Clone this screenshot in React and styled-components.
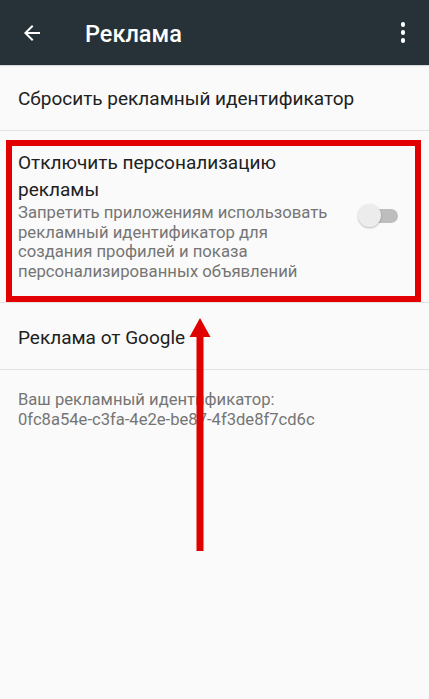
import React from "react";
import styled, { createGlobalStyle } from "styled-components";

const GlobalStyle = createGlobalStyle`
  html, body {
    margin: 0;
    padding: 0;
    background: #fafafa;
  }
  body {
    font-family: Roboto, "Noto Sans", "Liberation Sans", sans-serif;
    -webkit-font-smoothing: antialiased;
  }
`;

function App() {
  return (
    <Screen>
      <GlobalStyle />
      <Toolbar>
        <BackButton>
          <svg width="24" height="24" viewBox="0 0 24 24">
            <path
              d="M20 11H7.83l5.59-5.59L12 4l-8 8 8 8 1.41-1.41L7.83 13H20v-2z"
              fill="#fff"
            />
          </svg>
        </BackButton>
        <Title>Реклама</Title>
        <MenuButton>
          <Dot />
          <Dot />
          <Dot />
        </MenuButton>
      </Toolbar>

      <Row>
        <RowTitle>Сбросить рекламный идентификатор</RowTitle>
      </Row>
      <Divider />

      <HighlightSection>
        <Highlight>
          <SwitchRow>
            <TextCol>
              <RowTitle $multi>Отключить персонализацию рекламы</RowTitle>
              <Summary>
                Запретить приложениям использовать рекламный идентификатор для
                создания профилей и показа персонализированных объявлений
              </Summary>
            </TextCol>
            <Switch>
              <Track />
              <Thumb />
            </Switch>
          </SwitchRow>
        </Highlight>
      </HighlightSection>
      <Divider />

      <Row $tall>
        <RowTitle>Реклама от Google</RowTitle>
      </Row>
      <Divider />

      <Footer>
        Ваш рекламный идентификатор:
        <br />
        0fc8a54e-c3fa-4e2e-be87-4f3de8f7cd6c
      </Footer>

      <Arrow width="22" height="233" viewBox="0 0 22 233">
        <polygon points="11,0 21.5,19 0.5,19" fill="#e00000" />
        <rect x="7.5" y="17" width="7" height="216" fill="#e00000" />
      </Arrow>
    </Screen>
  );
}

const Screen = styled.div`
  position: relative;
  width: 429px;
  height: 699px;
  overflow: hidden;
  background: #fafafa;
`;

const Toolbar = styled.div`
  display: flex;
  align-items: center;
  height: 65px;
  background: #263238;
  box-shadow: 0 1px 1px rgba(0, 0, 0, 0.12);
`;

const BackButton = styled.div`
  display: flex;
  align-items: center;
  justify-content: center;
  width: 24px;
  height: 24px;
  margin-left: 20px;
`;

const Title = styled.div`
  flex: 1;
  margin-left: 41px;
  padding-top: 2px;
  color: #fff;
  font-size: 23.5px;
  font-weight: 500;
`;

const MenuButton = styled.div`
  display: flex;
  flex-direction: column;
  align-items: center;
  gap: 3.5px;
  margin-right: 24px;
`;

const Dot = styled.span`
  width: 4.5px;
  height: 4.5px;
  border-radius: 50%;
  background: #fff;
`;

const Row = styled.div`
  display: flex;
  align-items: center;
  height: ${(p) => (p.$tall ? "66px" : "65px")};
  padding-left: 18px;
  padding-top: ${(p) => (p.$tall ? "4px" : "2px")};
  box-sizing: border-box;
`;

const RowTitle = styled.div`
  color: #212121;
  font-size: 19px;
  line-height: ${(p) => (p.$multi ? "27px" : "24px")};
`;

const Divider = styled.div`
  height: 1px;
  background: #e3e3e3;
`;

const HighlightSection = styled.div`
  padding: 9px 8px 0 6px;
`;

const Highlight = styled.div`
  border: 6px solid #e30000;
`;

const SwitchRow = styled.div`
  display: flex;
  align-items: flex-start;
  gap: 26px;
  padding: 3px 17px 15px 6px;
`;

const TextCol = styled.div`
  flex: 1;
`;

const Summary = styled.div`
  color: #757575;
  font-size: 16.7px;
  line-height: 19.5px;
`;

const Switch = styled.div`
  position: relative;
  flex: none;
  width: 40px;
  height: 24px;
  margin-top: 55px;
`;

const Track = styled.div`
  position: absolute;
  left: 8px;
  right: 0;
  top: 5px;
  height: 14px;
  border-radius: 7px;
  background: #bdbdbd;
`;

const Thumb = styled.div`
  position: absolute;
  left: 0;
  top: 0;
  width: 23px;
  height: 23px;
  border-radius: 50%;
  background: #ececec;
  box-shadow: 0 1px 2px rgba(0, 0, 0, 0.25);
`;

const Footer = styled.div`
  padding: 20px 18px 0;
  color: #757575;
  font-size: 16.6px;
  line-height: 20px;
`;

const Arrow = styled.svg`
  position: absolute;
  left: 189px;
  top: 318px;
`;

export default App;
